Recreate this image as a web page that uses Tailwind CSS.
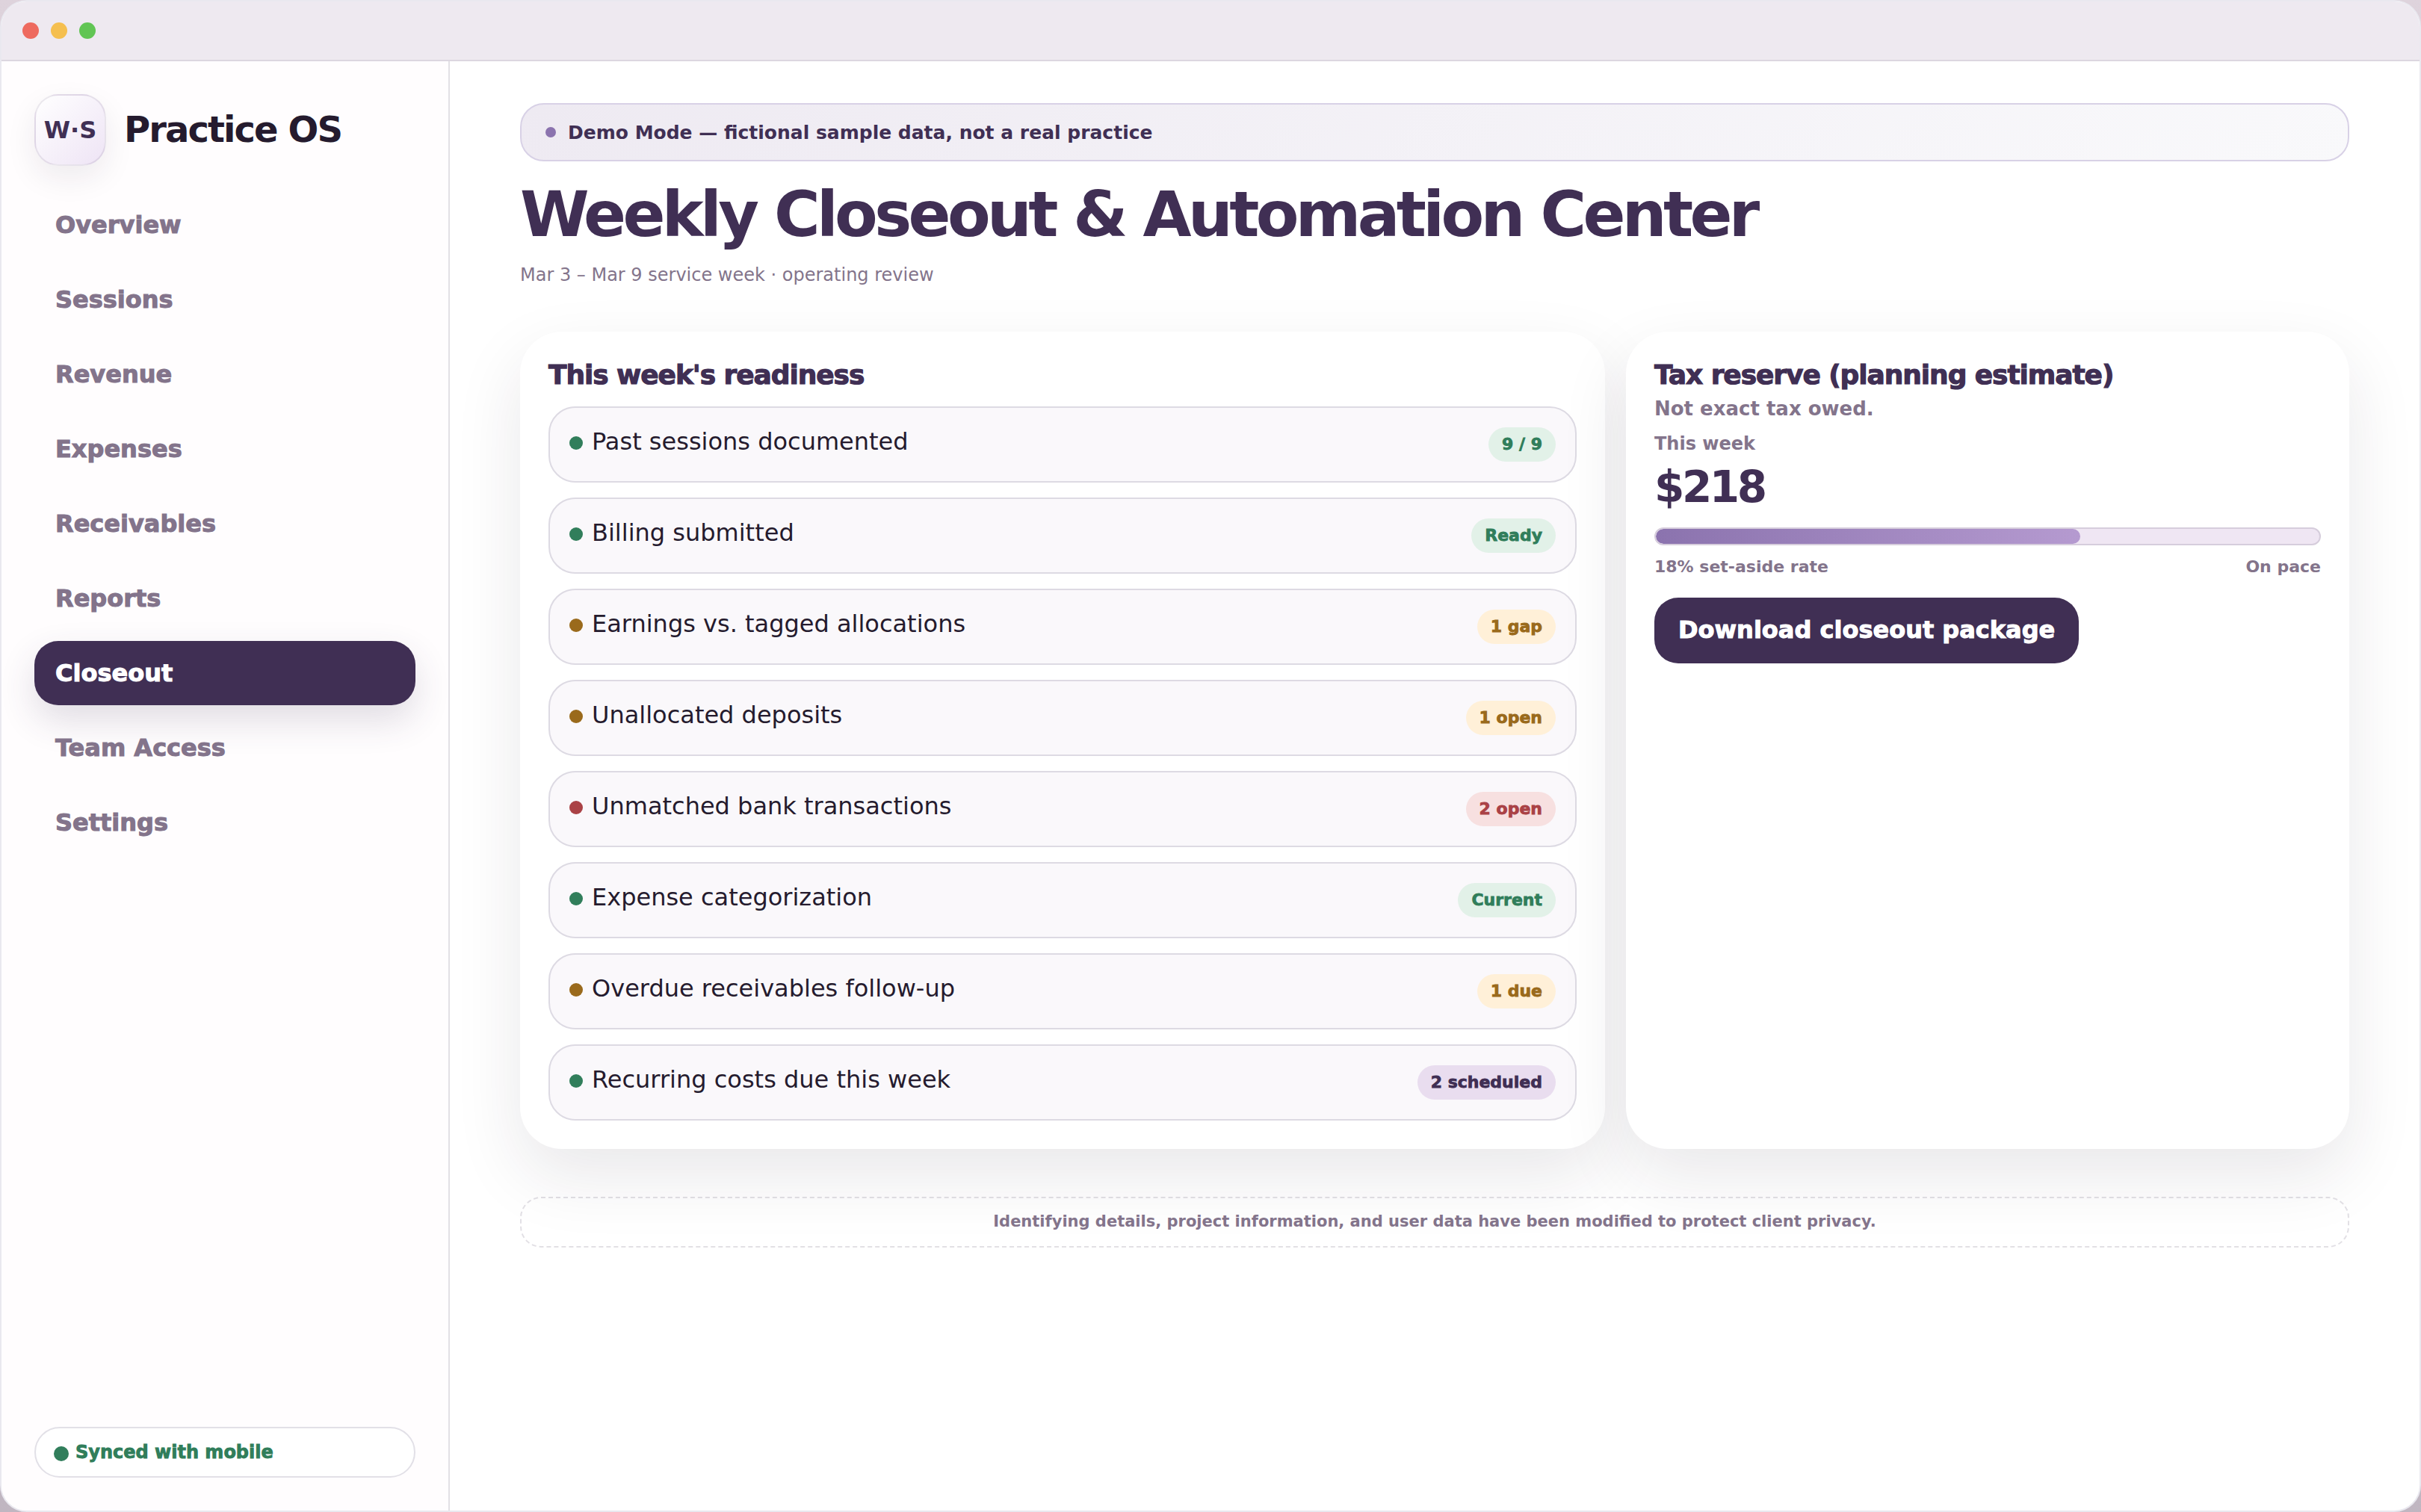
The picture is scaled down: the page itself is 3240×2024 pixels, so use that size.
<!DOCTYPE html>
<html lang="en">
<head>
<meta charset="utf-8">
<title>Practice OS – Weekly Closeout</title>
<script src="https://cdn.jsdelivr.net/npm/@tailwindcss/browser@4"></script>
</head>
<body class="h-[2024px] w-[3240px] overflow-hidden bg-linear-to-b from-[#ded3dc] to-[#c0b6c1] font-['DejaVu_Sans',sans-serif] text-[#251b2e]">
<div class="flex h-full w-full flex-col overflow-hidden rounded-[36px] border-2 border-[#e9e8ef] bg-white">
  <header class="flex h-20 shrink-0 items-center gap-4 border-b-2 border-[#dcd6e0] bg-[#eee9f0] pl-7">
    <span class="size-[22px] rounded-full bg-[#ee6a5f]"></span>
    <span class="size-[22px] rounded-full bg-[#f5bf4f]"></span>
    <span class="size-[22px] rounded-full bg-[#61c554]"></span>
  </header>
  <div class="flex min-h-0 flex-1">
    <aside class="flex w-[600px] shrink-0 flex-col border-r-2 border-[#e2e0e5] bg-[#fffdfe] px-11 pt-11 pb-[44px]">
      <div class="flex items-center gap-6">
        <div class="flex size-24 items-center justify-center rounded-[32px] border-2 border-[#402f54]/10 bg-linear-135 from-white to-[#eee4f5] text-[32px] font-bold text-[#402f54] shadow-[0_16px_40px_rgba(36,27,46,0.08)]">W·S</div>
        <div class="pb-0.5 text-5xl font-bold tracking-[-0.04em]">Practice OS</div>
      </div>
      <nav class="mt-9 flex flex-col gap-3.5 text-[32px]/[38px] font-[950] text-[#83748b]">
        <a class="rounded-[32px] px-7 py-6">Overview</a>
        <a class="rounded-[32px] px-7 py-6">Sessions</a>
        <a class="rounded-[32px] px-7 py-6">Revenue</a>
        <a class="rounded-[32px] px-7 py-6">Expenses</a>
        <a class="rounded-[32px] px-7 py-6">Receivables</a>
        <a class="rounded-[32px] px-7 py-6">Reports</a>
        <a class="rounded-[32px] bg-[#402f54] px-7 py-6 text-white shadow-[0_20px_48px_rgba(64,47,84,0.16)]">Closeout</a>
        <a class="rounded-[32px] px-7 py-6">Team Access</a>
        <a class="rounded-[32px] px-7 py-6">Settings</a>
      </nav>
      <div class="mt-auto flex h-[68px] items-center gap-[9px] rounded-full border-2 border-[#e2e0e7] bg-white pl-6 text-2xl font-[950] text-[#317e5b]">
        <span class="mt-[3px] size-5 rounded-full bg-[#317e5b]"></span>Synced with mobile
      </div>
    </aside>
    <main class="flex flex-1 flex-col px-[94px] pt-14">
      <div class="flex h-[78px] items-center gap-4 rounded-[32px] border-2 border-[#d8d1e6] bg-linear-135 from-[#eeeaf2] to-[#f9f9fb] pl-8 text-[25px] font-bold text-[#402f54]">
        <span class="size-3.5 rounded-full bg-[#8b73ae]"></span><span class="pt-0.5">Demo Mode — fictional sample data, not a real practice</span>
      </div>
      <h1 class="mt-[29px] text-[84px]/[84px] font-bold tracking-[-0.055em] text-[#402f54]">Weekly Closeout &amp; Automation Center</h1>
      <p class="mt-[25px] text-2xl/7 text-[#83748b]">Mar 3 – Mar 9 service week · operating review</p>
      <div class="mt-[62px] grid grid-cols-[3fr_2fr] gap-7">
        <section class="rounded-[56px] bg-white px-[38px] pt-[37px] pb-[38px] shadow-[0_36px_90px_rgba(36,27,46,0.10)]">
          <h2 class="text-[36px]/[42px] font-[950] tracking-[-0.03em] text-[#402f54]">This week's readiness</h2>
          <ul id="readiness" class="mt-[21px] flex flex-col gap-5"></ul>
        </section>
        <section class="flex flex-col items-start rounded-[56px] bg-white px-[38px] pt-[37px] pb-[38px] shadow-[0_36px_90px_rgba(36,27,46,0.10)]">
          <h2 class="text-[36px]/[42px] font-[950] tracking-[-0.03em] text-[#402f54]">Tax reserve (planning estimate)</h2>
          <p class="mt-[9px] text-[26px]/[30px] font-bold text-[#83748b]">Not exact tax owed.</p>
          <p class="mt-[18px] text-2xl/7 font-bold text-[#83748b]">This week</p>
          <p class="mt-[15px] text-[58px]/[58px] font-bold tracking-[-0.06em] text-[#402f54]">$218</p>
          <div class="mt-[25px] h-6 w-full overflow-hidden rounded-full border-2 border-[#d6cddc] bg-[#efe6f3]">
            <div class="h-full rounded-full bg-linear-to-r from-[#8b73ae] to-[#b59ad0]" style="width:64%"></div>
          </div>
          <div class="mt-4 flex w-full justify-between text-[22px]/[26px] font-bold text-[#83748b]"><span>18% set-aside rate</span><span>On pace</span></div>
          <button class="mt-7 h-[88px] rounded-[32px] bg-[#402f54] px-8 pb-0.5 text-[32px]/[38px] font-[950] text-white">Download closeout package</button>
        </section>
      </div>
      <footer class="mt-16 flex h-[68px] items-center justify-center rounded-[28px] border-2 border-dashed border-[#402f54]/15 text-[21px] font-bold text-[#83748b]">Identifying details, project information, and user data have been modified to protect client privacy.</footer>
    </main>
  </div>
</div>
<script>
const tones = {
  green: ['bg-[#317e5b]', 'bg-[#e2f1e8] text-[#317e5b]'],
  amber: ['bg-[#9a6a1c]', 'bg-[#fff0d8] text-[#9a6a1c]'],
  red: ['bg-[#aa4246]', 'bg-[#f7e0e0] text-[#aa4246]'],
  violet: ['bg-[#317e5b]', 'bg-[#e9ddef] text-[#402f54]'],
};
const rows = [
  ['Past sessions documented', '9 / 9', 'green'],
  ['Billing submitted', 'Ready', 'green'],
  ['Earnings vs. tagged allocations', '1 gap', 'amber'],
  ['Unallocated deposits', '1 open', 'amber'],
  ['Unmatched bank transactions', '2 open', 'red'],
  ['Expense categorization', 'Current', 'green'],
  ['Overdue receivables follow-up', '1 due', 'amber'],
  ['Recurring costs due this week', '2 scheduled', 'violet'],
];
document.getElementById('readiness').innerHTML = rows.map(([label, status, tone]) => `
  <li class="flex h-[102px] items-start justify-between rounded-[36px] border-2 border-[#dddae3] bg-[#faf8fb] p-[26px]">
    <span class="flex items-baseline gap-3 text-[32px]/[38px]"><span class="size-[18px] rounded-full ${tones[tone][0]}"></span>${label}</span>
    <span class="flex h-[46px] items-center rounded-full px-[18px] text-[22px]/[26px] font-[950] ${tones[tone][1]}">${status}</span>
  </li>`).join('');
</script>
</body>
</html>
